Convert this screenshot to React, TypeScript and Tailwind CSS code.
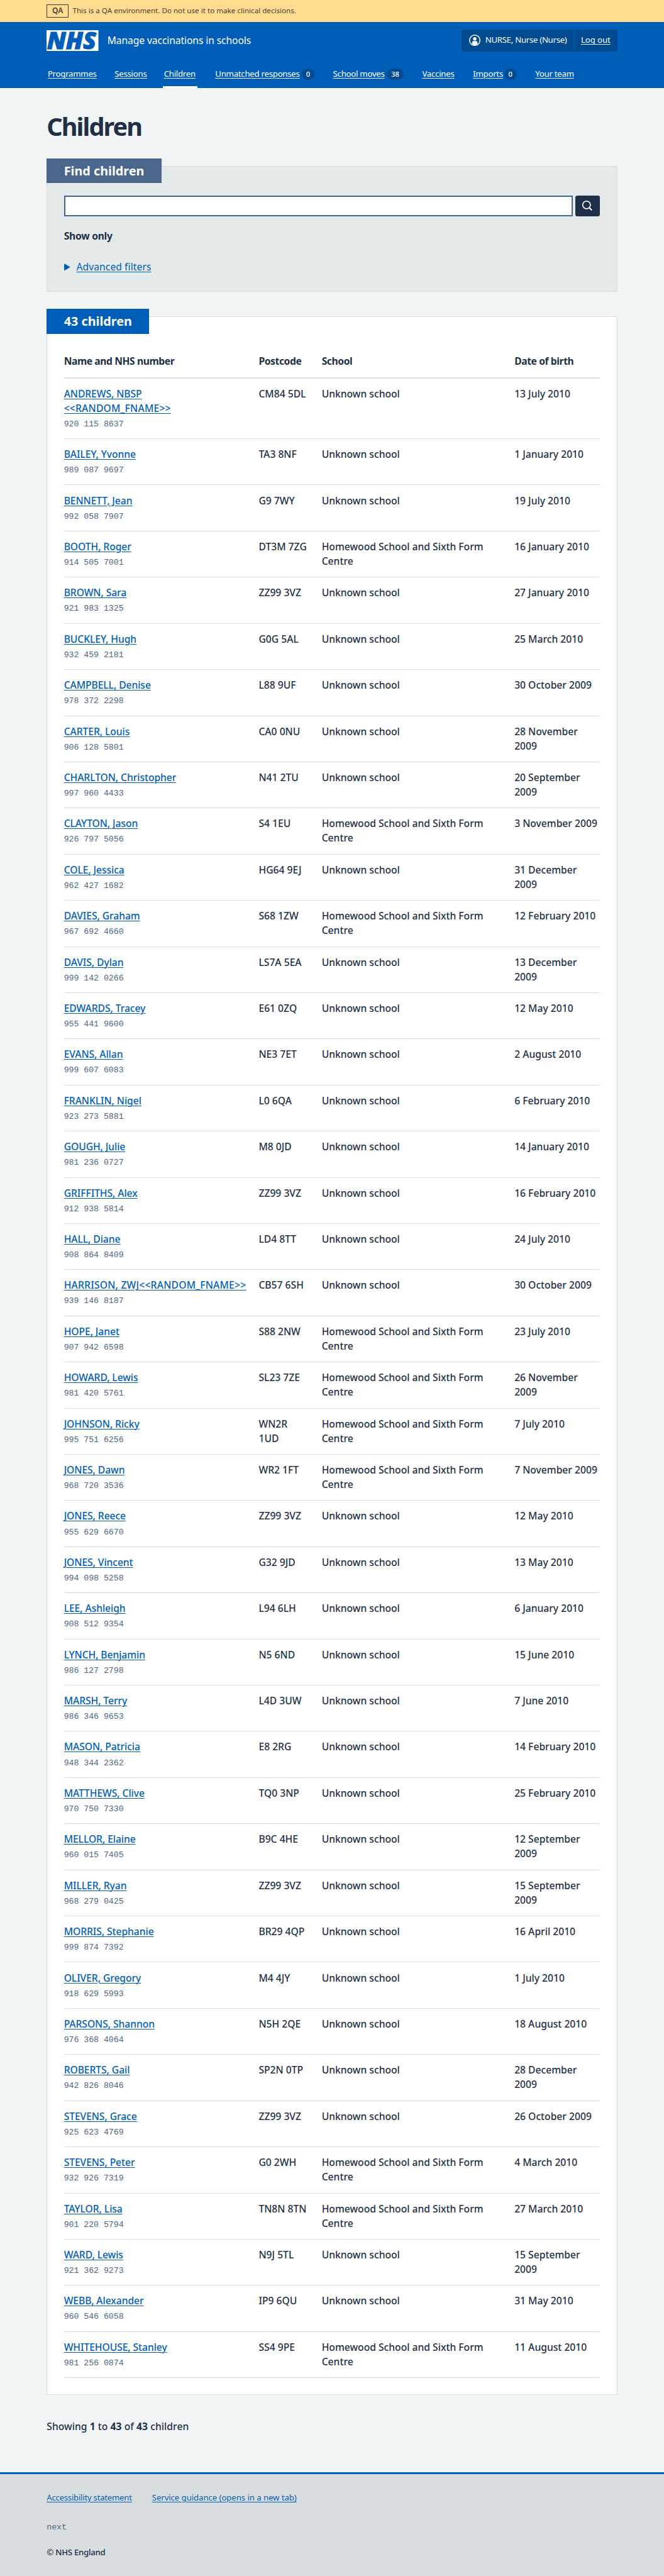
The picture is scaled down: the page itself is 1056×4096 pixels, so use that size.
type Child = {
  name: string[];
  nhs: string;
  postcode: string[];
  homewood?: boolean;
  dob: string[];
};

const c = (name: string, nhs: string, postcode: string, dob: string, homewood = false): Child => ({
  name: name.split("|"),
  nhs,
  postcode: postcode.split("|"),
  dob: dob.split("|"),
  homewood,
});

const children: Child[] = [
  c("ANDREWS, NBSP|<<RANDOM_FNAME>>", "920 115 8637", "CM84 5DL", "13 July 2010"),
  c("BAILEY, Yvonne", "989 087 9697", "TA3 8NF", "1 January 2010"),
  c("BENNETT, Jean", "992 058 7907", "G9 7WY", "19 July 2010"),
  c("BOOTH, Roger", "914 505 7001", "DT3M 7ZG", "16 January 2010", true),
  c("BROWN, Sara", "921 983 1325", "ZZ99 3VZ", "27 January 2010"),
  c("BUCKLEY, Hugh", "932 459 2181", "G0G 5AL", "25 March 2010"),
  c("CAMPBELL, Denise", "978 372 2298", "L88 9UF", "30 October 2009"),
  c("CARTER, Louis", "906 128 5801", "CA0 0NU", "28 November|2009"),
  c("CHARLTON, Christopher", "997 960 4433", "N41 2TU", "20 September|2009"),
  c("CLAYTON, Jason", "926 797 5056", "S4 1EU", "3 November 2009", true),
  c("COLE, Jessica", "962 427 1682", "HG64 9EJ", "31 December|2009"),
  c("DAVIES, Graham", "967 692 4660", "S68 1ZW", "12 February 2010", true),
  c("DAVIS, Dylan", "999 142 0266", "LS7A 5EA", "13 December|2009"),
  c("EDWARDS, Tracey", "955 441 9600", "E61 0ZQ", "12 May 2010"),
  c("EVANS, Allan", "999 607 6083", "NE3 7ET", "2 August 2010"),
  c("FRANKLIN, Nigel", "923 273 5881", "L0 6QA", "6 February 2010"),
  c("GOUGH, Julie", "981 236 0727", "M8 0JD", "14 January 2010"),
  c("GRIFFITHS, Alex", "912 938 5814", "ZZ99 3VZ", "16 February 2010"),
  c("HALL, Diane", "908 864 8409", "LD4 8TT", "24 July 2010"),
  c("HARRISON, ZWJ<<RANDOM_FNAME>>", "939 146 8187", "CB57 6SH", "30 October 2009"),
  c("HOPE, Janet", "907 942 6598", "S88 2NW", "23 July 2010", true),
  c("HOWARD, Lewis", "981 420 5761", "SL23 7ZE", "26 November|2009", true),
  c("JOHNSON, Ricky", "995 751 6256", "WN2R|1UD", "7 July 2010", true),
  c("JONES, Dawn", "968 720 3536", "WR2 1FT", "7 November 2009", true),
  c("JONES, Reece", "955 629 6670", "ZZ99 3VZ", "12 May 2010"),
  c("JONES, Vincent", "994 098 5258", "G32 9JD", "13 May 2010"),
  c("LEE, Ashleigh", "908 512 9354", "L94 6LH", "6 January 2010"),
  c("LYNCH, Benjamin", "986 127 2798", "N5 6ND", "15 June 2010"),
  c("MARSH, Terry", "986 346 9653", "L4D 3UW", "7 June 2010"),
  c("MASON, Patricia", "948 344 2362", "E8 2RG", "14 February 2010"),
  c("MATTHEWS, Clive", "970 750 7330", "TQ0 3NP", "25 February 2010"),
  c("MELLOR, Elaine", "960 015 7405", "B9C 4HE", "12 September|2009"),
  c("MILLER, Ryan", "968 279 0425", "ZZ99 3VZ", "15 September|2009"),
  c("MORRIS, Stephanie", "999 874 7392", "BR29 4QP", "16 April 2010"),
  c("OLIVER, Gregory", "918 629 5993", "M4 4JY", "1 July 2010"),
  c("PARSONS, Shannon", "976 368 4064", "N5H 2QE", "18 August 2010"),
  c("ROBERTS, Gail", "942 826 8046", "SP2N 0TP", "28 December|2009"),
  c("STEVENS, Grace", "925 623 4769", "ZZ99 3VZ", "26 October 2009"),
  c("STEVENS, Peter", "932 926 7319", "G0 2WH", "4 March 2010", true),
  c("TAYLOR, Lisa", "901 220 5794", "TN8N 8TN", "27 March 2010", true),
  c("WARD, Lewis", "921 362 9273", "N9J 5TL", "15 September|2009"),
  c("WEBB, Alexander", "960 546 6058", "IP9 6QU", "31 May 2010"),
  c("WHITEHOUSE, Stanley", "981 256 0874", "SS4 9PE", "11 August 2010", true),
];

const nav: { label: string; width: string; count?: string; badge?: string; current?: boolean }[] = [
  { label: "Programmes", width: "w-[93px]" },
  { label: "Sessions", width: "w-[59px]" },
  { label: "Children", width: "w-[63px]", current: true },
  { label: "Unmatched responses", width: "w-[163px]", count: "0", badge: "w-6" },
  { label: "School moves", width: "w-[100px]", count: "38", badge: "w-8" },
  { label: "Vaccines", width: "w-[62px]" },
  { label: "Imports", width: "w-[56px]", count: "0", badge: "w-6" },
  { label: "Your team", width: "w-[77px]" },
];

const COLS = "grid grid-cols-[375.5px_121.5px_371.5px_1fr]";

function Lines({ lines }: { lines: string[] }) {
  return (
    <>
      {lines.map((line) => (
        <span key={line} className="block whitespace-nowrap">
          {line}
        </span>
      ))}
    </>
  );
}

function Row({ child }: { child: Child }) {
  const height = child.name.length > 1 ? "h-[117px]" : "h-[88.98px]";
  return (
    <div className={`${COLS} ${height} border-b border-[#d8dde0] pt-[15.8px]`}>
      <div>
        <a className="whitespace-nowrap tracking-[-0.08px] text-[#005eb8] underline decoration-[1.3px] underline-offset-[2.5px]">
          {child.name.map((line, i) => (
            <span key={line} className={line.includes("<<") ? "tracking-[0.25px]" : ""}>
              {i > 0 && <br />}
              {line}
            </span>
          ))}
        </a>
        <div className="mt-[2.4px] font-['Liberation_Mono',monospace] text-[16px] font-normal text-[#4c6583]">
          {child.nhs}
        </div>
      </div>
      <div>
        <Lines lines={child.postcode} />
      </div>
      <div>
        <Lines lines={child.homewood ? ["Homewood School and Sixth Form", "Centre"] : ["Unknown school"]} />
      </div>
      <div>
        <Lines lines={child.dob} />
      </div>
    </div>
  );
}

function Header() {
  return (
    <header className="h-32 bg-[#005eb8] text-white">
      <div className="mx-auto w-[1100px]">
        <div className="flex h-[72px] items-center">
          <svg viewBox="0 0 100 40" className="h-10 w-[100px] overflow-visible">
            <rect width="100" height="40" fill="#fff" />
            <text
              x="0.8"
              y="35.8"
              fontFamily="'Open Sans', sans-serif"
              fontSize="45"
              fontWeight="800"
              fontStyle="italic"
              textLength="95"
              lengthAdjust="spacingAndGlyphs"
              fill="#005eb8"
              stroke="#005eb8"
              strokeWidth="1.3"
            >
              NHS
            </text>
          </svg>
          <span className="ml-[17px] text-[19px] leading-7 tracking-[-0.13px]">Manage vaccinations in schools</span>
          <div className="ml-auto flex h-[42px] w-[300px] items-center rounded bg-[#004b8f] text-[16px] leading-6">
            <div className="flex w-[217px] items-center pl-[14.5px]">
              <svg viewBox="0 0 22 22" className="mr-[9px] size-[22px] shrink-0">
                <circle cx="11" cy="11" r="10" fill="none" stroke="#fff" strokeWidth="1.8" />
                <circle cx="11" cy="8.3" r="3.3" fill="#fff" />
                <path
                  d="M5.8 18.2V15a2.6 2.6 0 0 1 2.6-2.6h5.2a2.6 2.6 0 0 1 2.6 2.6v3.2A9 9 0 0 1 11 20.4a9 9 0 0 1-5.2-2.2Z"
                  fill="#fff"
                />
              </svg>
              <span className="whitespace-nowrap tracking-[-0.35px]">NURSE, Nurse (Nurse)</span>
            </div>
            <div className="h-10 w-px bg-[#005eb8]" />
            <a className="ml-3 tracking-[-0.1px] underline decoration-[1.2px] underline-offset-[2.5px]">Log out</a>
          </div>
        </div>
        <nav className="flex h-14 gap-9 border-t border-[#005bb3] pl-0.5 text-[16px] leading-[54px]">
          {nav.map((item) => (
            <div key={item.label} className="relative flex items-center gap-1">
              <a
                className={`${item.width} whitespace-nowrap tracking-[-0.3px] underline decoration-[1.2px] underline-offset-[2.5px]`}
              >
                {item.label}
              </a>
              {item.count && (
                <span
                  className={`${item.badge} flex h-[22px] items-center justify-center rounded-full bg-[#004b8f] text-[13.5px] leading-none font-medium`}
                >
                  {item.count}
                </span>
              )}
              {item.current && <div className="absolute -inset-x-0.5 bottom-0 h-1 bg-white" />}
            </div>
          ))}
        </nav>
      </div>
    </header>
  );
}

export default function App() {
  return (
    <div className="h-[4964.8px] w-[1280px] overflow-hidden bg-[#f0f4f5] font-['Noto_Sans',sans-serif] text-[#212f45] [zoom:0.825]">
      <div className="h-[42px] bg-[#ffdc8e] text-[#4a3a3a]">
        <div className="mx-auto flex h-full w-[1100px] items-center">
          <span className="flex h-[26px] w-[42px] items-center justify-center border border-[#4a3a3a] text-[14.5px] leading-none font-semibold">
            QA
          </span>
          <span className="ml-2 text-[14px] leading-5 tracking-[0.04px]">
            This is a QA environment. Do not use it to make clinical decisions.
          </span>
        </div>
      </div>

      <Header />

      <main className="mx-auto h-[4594.5px] w-[1100px] pt-[45.4px] text-[19px] leading-7 font-medium">
        <h1 className="text-[48px] leading-[56px] font-bold tracking-[-2.3px]">Children</h1>

        <section className="mt-[48.6px] h-[242px] border border-[#d8dde0] bg-[#e4e9e9]">
          <h2 className="-mt-4 -ml-px h-12 w-[221px] bg-[#4b668b] pl-[33px] text-[24px] leading-[48px] font-bold text-white">
            Find children
          </h2>
          <div className="px-8">
            <div className="mt-6 flex h-10 gap-1">
              <input className="h-10 flex-1 border-[2.5px] border-[#4b668b] bg-white" />
              <button className="flex w-12 justify-center rounded bg-[#1f2f49] pt-[8px]">
                <svg viewBox="0 0 22 22" className="size-[22px]" fill="none" stroke="#fff" strokeWidth="2">
                  <circle cx="9.5" cy="9.5" r="7.4" />
                  <path d="m14.8 14.8 4.8 4.8" strokeWidth="2.5" />
                </svg>
              </button>
            </div>
            <p className="mt-[24px] font-bold tracking-[-0.3px]">Show only</p>
            <div className="mt-[31.6px] flex items-center font-normal text-[#005eb8]">
              <svg viewBox="0 0 12 14" className="mr-3 h-3.5 w-3">
                <path d="M0 0 12 7 0 14Z" fill="#005eb8" />
              </svg>
              <a className="tracking-[0.08px] underline decoration-[1.2px] underline-offset-[2.5px]">Advanced filters</a>
            </div>
          </div>
        </section>

        <section className="mt-12 h-[4006px] border border-[#d8dde0] bg-white">
          <h2 className="-mt-4 -ml-px h-12 w-[197px] bg-[#005eb8] pl-[33px] text-[24px] leading-[48px] font-bold text-white">
            43 children
          </h2>
          <div className="px-8">
            <div
              className={`${COLS} h-[86px] border-b-[2.5px] border-[#d8dde0] pt-[39.8px] font-bold tracking-[-0.5px]`}
            >
              <div>Name and NHS number</div>
              <div>Postcode</div>
              <div>School</div>
              <div>Date of birth</div>
            </div>
            {children.map((child) => (
              <Row key={child.nhs} child={child} />
            ))}
          </div>
        </section>

        <p className="mt-[47.2px] tracking-[0.05px]">
          Showing <b>1</b> to <b>43</b> of <b>43</b> children
        </p>
      </main>

      <footer className="h-[200.3px] border-t-4 border-[#005eb8] bg-[#d8dde0] pt-[34.3px] text-[16px] leading-6">
        <div className="mx-auto w-[1100px]">
          <div className="flex gap-[37px] text-[#005eb8]">
            <a className="w-[166px] whitespace-nowrap tracking-[-0.3px] underline decoration-[1.2px] underline-offset-[2.5px]">
              Accessibility statement
            </a>
            <a className="tracking-[-0.08px] underline decoration-[1.2px] underline-offset-[2.5px]">
              Service guidance (opens in a new tab)
            </a>
          </div>
          <div className="mt-[33.4px] font-['Liberation_Mono',monospace] text-[#4c6583]">next</div>
          <div className="mt-[24.2px] font-medium tracking-[-0.3px]">© NHS England</div>
        </div>
      </footer>
    </div>
  );
}
